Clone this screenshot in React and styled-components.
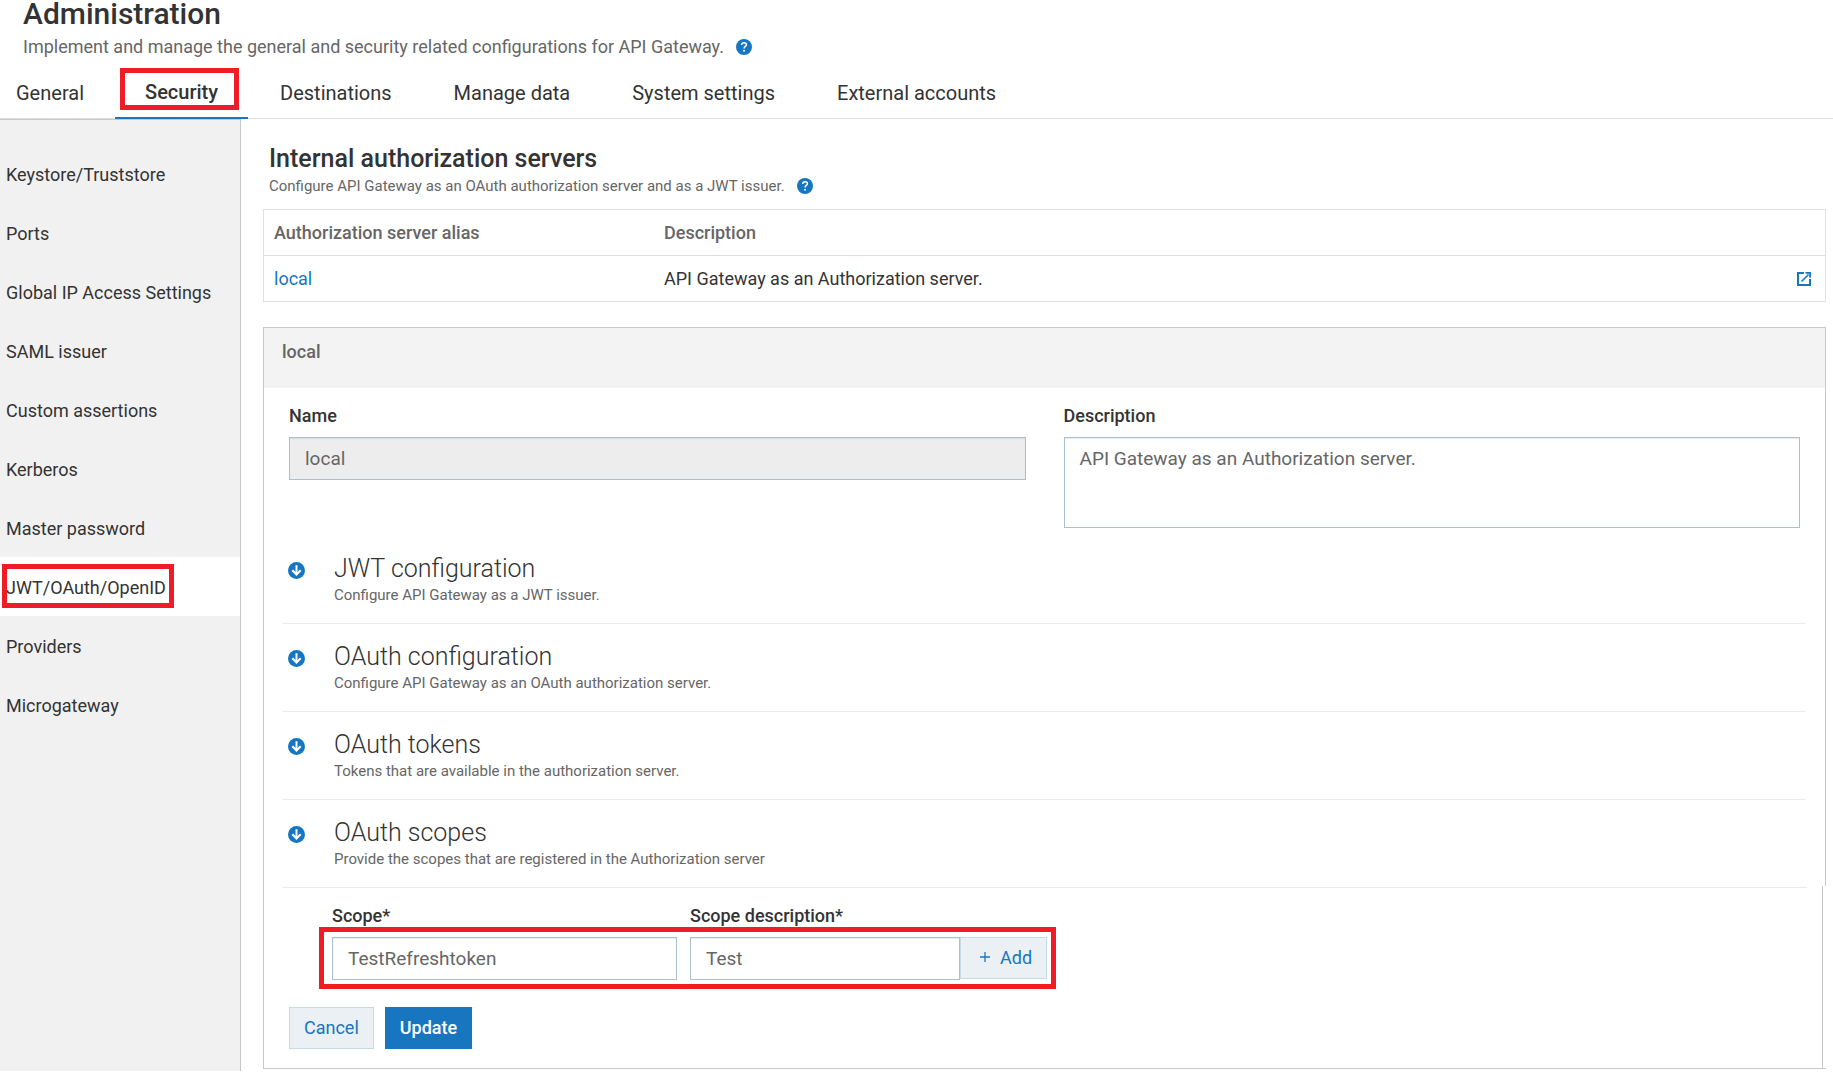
import React from 'react'
import styled, { createGlobalStyle, css } from 'styled-components'

const blue = '#1776bf'
const ink = '#333'
const muted = '#666'
const line = '#c8c8c8'

const GlobalStyle = createGlobalStyle`
  * {
    box-sizing: border-box;
  }

  body {
    margin: 0;
    background: #fff;
    color: ${ink};
    font-family: Roboto, 'Liberation Sans', sans-serif;
    font-size: 18px;
    line-height: 24px;
  }

  h1, h2, h3, p, ul {
    margin: 0;
    padding: 0;
  }

  input, textarea, button {
    font-family: inherit;
  }
`

/* Red frame drawn over the part of the page it points at */
const frame = css`
  content: '';
  position: absolute;
  border: 5px solid #ee1c24;
  pointer-events: none;
`

const Header = styled.header`
  padding: 0 23px;
`

const PageTitle = styled.h1`
  font-size: 30px;
  font-weight: 500;
  line-height: 28px;
`

const Hint = styled.p`
  display: flex;
  align-items: center;
  gap: 12px;
  margin-top: 7px;
  color: ${muted};
`

const SmallHint = styled(Hint)`
  margin-top: 3px;
  font-size: 15px;
  line-height: 20px;
`

const HelpButton = styled.button`
  display: flex;
  padding: 0;
  border: 0;
  background: none;
  color: ${blue};
`

const Tabs = styled.nav`
  display: flex;
  gap: 2px;
  padding-top: 1px;
  border-bottom: 1px solid #e0e0e0;
`

const Tab = styled.a`
  position: relative;
  margin-bottom: -1px;
  padding: 21px 30px 12px;
  border-bottom: 2px solid transparent;
  color: ${ink};
  font-size: 20px;
  text-decoration: none;

  &:first-child {
    padding-left: 16px;
    padding-right: 29px;
  }

  ${p => p.$active && css`
    padding-top: 20px;
    padding-bottom: 13px;
    border-color: ${blue};
    font-weight: 500;

    &::after {
      ${frame}
      inset: 8px 9px 7px 5px;
    }
  `}
`

const Layout = styled.div`
  display: flex;
  align-items: stretch;
`

const Sidebar = styled.nav`
  flex: 0 0 241px;
  padding-top: 24px;
  border-top: 1px solid ${line};
  border-right: 1px solid ${line};
  background: #f1f1f1;
`

const SideLink = styled.a`
  position: relative;
  display: block;
  padding: 19px 6px 16px;
  color: ${ink};
  text-decoration: none;

  ${p => p.$active && css`
    background: #fff;

    &::after {
      ${frame}
      inset: 7px 66px 8px 2px;
    }
  `}
`

const Main = styled.main`
  flex: 1;
  min-width: 0;
  padding: 26px 7px 2px 22px;
`

const Heading = styled.div`
  padding-left: 6px;
`

const SectionTitle = styled.h2`
  font-size: 25px;
  font-weight: 500;
  line-height: 28px;
`

const Table = styled.table`
  width: 100%;
  margin-top: 13px;
  border: 1px solid #e0e0e0;
  border-collapse: collapse;
  table-layout: fixed;
`

const Cell = styled.td`
  width: ${p => p.$width || 'auto'};
  height: 46px;
  padding: 0 10px;
  border-bottom: 1px solid #e0e0e0;
  text-align: left;
`

const HeadCell = styled(Cell)`
  color: ${muted};
  font-weight: 500;
`

const Link = styled.a`
  color: ${blue};
  text-decoration: none;
`

const OpenLink = styled(Link)`
  display: flex;
  justify-content: flex-end;
  padding-right: 4px;
`

const Panel = styled.section`
  margin-top: 25px;
  border: solid ${line};
  border-width: 1px 0 1px 1px;
`

const PanelTop = styled.div`
  border-right: 1px solid ${line};
`

const PanelBottom = styled.div`
  margin-right: 3px;
  padding: 1px 15px 19px 18px;
  border-right: 1px solid ${line};
`

const PanelHeader = styled.h3`
  padding: 12px 18px 24px;
  background: #f3f3f3;
  color: ${muted};
  font-size: 18px;
  font-weight: 500;
`

const Fields = styled.div`
  display: grid;
  grid-template-columns: 1fr 1fr;
  align-items: start;
  gap: 38px;
  padding: 16px 25px 0;
`

const Field = styled.div`
  display: flex;
  flex-direction: column;
  gap: 9px;
  width: ${p => p.$width || 'auto'};
`

const Label = styled.label`
  font-weight: 500;
`

const control = css`
  width: 100%;
  border: 1px solid #abc0d1;
  border-radius: 0;
  box-shadow: inset 0 1px 1px rgba(0, 0, 0, 0.08);
  background: #fff;
  color: ${muted};
  font-size: 19px;
  outline: none;
`

const Input = styled.input`
  ${control}
  height: 43px;
  padding: 0 15px;

  &:disabled {
    background: #ededed;
  }
`

const TextArea = styled.textarea`
  ${control}
  height: 91px;
  padding: 9px 15px;
  line-height: 24px;
  resize: none;
`

const Accordions = styled.div`
  margin-top: 8px;
  padding: 0 19px 0 18px;
`

const Accordion = styled.div`
  display: flex;
  align-items: flex-start;
  gap: 29px;
  padding: 17px 6px 18px;
  border-bottom: 1px solid #ebebeb;

  &:last-child {
    padding-bottom: 17px;
    border-bottom: 0;
  }
`

const Toggle = styled.button`
  display: flex;
  margin-top: 9px;
  padding: 0;
  border: 0;
  background: none;
`

const AccordionTitle = styled.h3`
  font-size: 25px;
  font-weight: 300;
  line-height: 32px;
`

const AccordionText = styled.p`
  color: ${muted};
  font-size: 15px;
  line-height: 20px;
`

const ScopeForm = styled.div`
  display: flex;
  align-items: flex-end;
  padding: 16px 0 0 50px;
  border-top: 1px solid #ebebeb;
`

const ScopeRow = styled.div`
  position: relative;
  display: flex;
  gap: 13px;

  &::after {
    ${frame}
    inset: 23px -9px -9px -13px;
  }
`

const AddGroup = styled.div`
  display: flex;
  align-items: flex-end;
`

const Button = styled.button`
  height: 42px;
  padding: 0 14px 2px;
  border: 1px solid #c4dbe4;
  background: #ebf0f5;
  color: ${blue};
  font-size: 18px;

  ${p => p.$primary && css`
    border-color: ${blue};
    background: ${blue};
    color: #fff;
    font-weight: 500;
  `}
`

const AddButton = styled(Button)`
  display: flex;
  align-items: center;
  gap: 10px;
  margin-bottom: 1px;
  padding-left: 19px;
`

const Actions = styled.div`
  display: flex;
  gap: 11px;
  margin-top: 27px;
  padding-left: 7px;
`

const HelpIcon = () => (
  <svg width="16" height="16" viewBox="0 0 16 16" aria-hidden="true">
    <circle cx="8" cy="8" r="8" fill={blue} />
    <path
      d="M5.7 6.1C5.7 4.6 6.7 3.7 8 3.7s2.4.8 2.4 2.1c0 1.6-2.3 1.7-2.3 3.7"
      fill="none"
      stroke="#fff"
      strokeWidth="1.5"
    />
    <rect x="7.2" y="10.9" width="1.7" height="1.7" fill="#fff" />
  </svg>
)

const ArrowIcon = () => (
  <svg width="17" height="17" viewBox="0 0 17 17" aria-hidden="true">
    <circle cx="8.5" cy="8.5" r="8.5" fill={blue} />
    <path d="M8.5 3.2v9M4.3 8.2l4.2 4.3 4.2-4.3" fill="none" stroke="#fff" strokeWidth="2" />
  </svg>
)

const OpenIcon = () => (
  <svg width="14" height="14" viewBox="0 0 14 14" fill="none" stroke={blue} aria-hidden="true">
    <path d="M7 1H1v12h12V7" strokeWidth="2" />
    <path d="M4.5 9.5l7-7" strokeWidth="1.6" />
    <path d="M8.5 0H14v5.5h-1.8V1.8H8.5z" fill={blue} stroke="none" />
  </svg>
)

const PlusIcon = () => (
  <svg width="10" height="10" viewBox="0 0 10 10" stroke={blue} aria-hidden="true">
    <path d="M5 0v10M0 5h10" strokeWidth="1.3" />
  </svg>
)

const tabs = [
  'General',
  'Security',
  'Destinations',
  'Manage data',
  'System settings',
  'External accounts',
]

const sideLinks = [
  'Keystore/Truststore',
  'Ports',
  'Global IP Access Settings',
  'SAML issuer',
  'Custom assertions',
  'Kerberos',
  'Master password',
  'JWT/OAuth/OpenID',
  'Providers',
  'Microgateway',
]

const sections = [
  { title: 'JWT configuration', text: 'Configure API Gateway as a JWT issuer.' },
  { title: 'OAuth configuration', text: 'Configure API Gateway as an OAuth authorization server.' },
  { title: 'OAuth tokens', text: 'Tokens that are available in the authorization server.' },
  { title: 'OAuth scopes', text: 'Provide the scopes that are registered in the Authorization server' },
]

const App = () => (
  <>
    <GlobalStyle />
    <Header>
      <PageTitle>Administration</PageTitle>
      <Hint>
        Implement and manage the general and security related configurations for API Gateway.
        <HelpButton aria-label="Help"><HelpIcon /></HelpButton>
      </Hint>
    </Header>

    <Tabs>
      {tabs.map(tab => (
        <Tab key={tab} href="#" $active={tab === 'Security'}>{tab}</Tab>
      ))}
    </Tabs>

    <Layout>
      <Sidebar>
        {sideLinks.map(link => (
          <SideLink key={link} href="#" $active={link === 'JWT/OAuth/OpenID'}>{link}</SideLink>
        ))}
      </Sidebar>

      <Main>
        <Heading>
          <SectionTitle>Internal authorization servers</SectionTitle>
          <SmallHint>
            Configure API Gateway as an OAuth authorization server and as a JWT issuer.
            <HelpButton aria-label="Help"><HelpIcon /></HelpButton>
          </SmallHint>
        </Heading>

        <Table>
          <thead>
            <tr>
              <HeadCell as="th" $width="25%">Authorization server alias</HeadCell>
              <HeadCell as="th">Description</HeadCell>
              <HeadCell $width="60px" />
            </tr>
          </thead>
          <tbody>
            <tr>
              <Cell><Link href="#">local</Link></Cell>
              <Cell>API Gateway as an Authorization server.</Cell>
              <Cell><OpenLink href="#" aria-label="Open"><OpenIcon /></OpenLink></Cell>
            </tr>
          </tbody>
        </Table>

        <Panel>
          <PanelTop>
            <PanelHeader>local</PanelHeader>
            <Fields>
              <Field>
                <Label htmlFor="name">Name</Label>
                <Input id="name" defaultValue="local" disabled />
              </Field>
              <Field>
                <Label htmlFor="description">Description</Label>
                <TextArea id="description" defaultValue="API Gateway as an Authorization server." />
              </Field>
            </Fields>

            <Accordions>
              {sections.map(({ title, text }) => (
                <Accordion key={title}>
                  <Toggle aria-label={title}><ArrowIcon /></Toggle>
                  <div>
                    <AccordionTitle>{title}</AccordionTitle>
                    <AccordionText>{text}</AccordionText>
                  </div>
                </Accordion>
              ))}
            </Accordions>
          </PanelTop>

          <PanelBottom>
            <ScopeForm>
              <ScopeRow>
                <Field $width="345px">
                  <Label htmlFor="scope">Scope*</Label>
                  <Input id="scope" defaultValue="TestRefreshtoken" />
                </Field>
                <AddGroup>
                  <Field $width="270px">
                    <Label htmlFor="scope-description">Scope description*</Label>
                    <Input id="scope-description" defaultValue="Test" />
                  </Field>
                  <AddButton><PlusIcon />Add</AddButton>
                </AddGroup>
              </ScopeRow>
            </ScopeForm>
            <Actions>
              <Button>Cancel</Button>
              <Button $primary>Update</Button>
            </Actions>
          </PanelBottom>
        </Panel>
      </Main>
    </Layout>
  </>
)

export default App
